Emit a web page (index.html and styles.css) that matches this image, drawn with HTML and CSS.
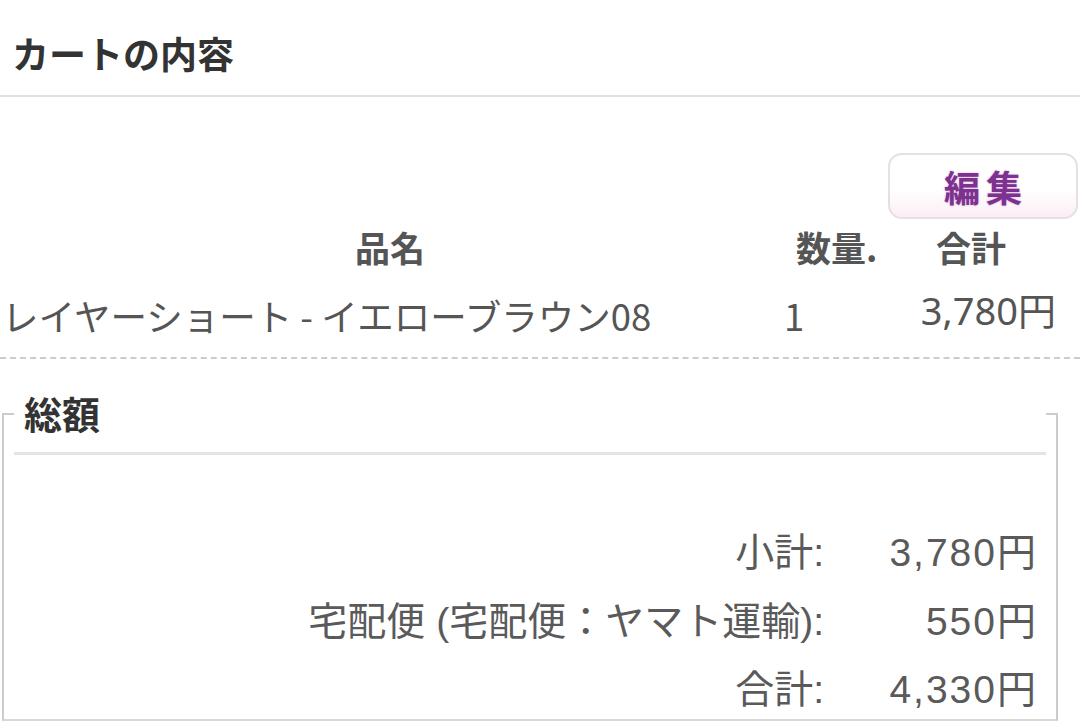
FILE: index.html
```html
<!DOCTYPE html>
<html lang="ja">
<head>
<meta charset="utf-8">
<link rel="stylesheet" href="styles.css">
</head>
<body>
<div class="page">
  <header class="title-bar">
    <h1 class="title">カートの内容</h1>
  </header>
  <section class="cart">
    <div class="actions">
      <button class="edit-btn">編集</button>
    </div>
    <div class="cart-grid">
      <div class="th th-name">品名</div>
      <div class="th th-qty">数量.</div>
      <div class="th th-total">合計</div>
      <div class="td td-name">レイヤーショート - イエローブラウン08</div>
      <div class="td td-qty">1</div>
      <div class="td td-total">3,780円</div>
    </div>
  </section>
  <fieldset class="summary">
    <legend class="summary-legend">総額</legend>
    <div class="summary-rows">
      <div class="s-label">小計:</div><div class="s-value">3,780円</div>
      <div class="s-label">宅配便 (宅配便：ヤマト運輸):</div><div class="s-value">550円</div>
      <div class="s-label">合計:</div><div class="s-value">4,330円</div>
    </div>
  </fieldset>
</div>
</body>
</html>
```
FILE: styles.css
```css
html, body {
  margin: 0;
  padding: 0;
  background: #fff;
}
body {
  width: 1080px;
  height: 722px;
  overflow: hidden;
  font-family: "Noto Sans CJK JP", "Noto Sans", sans-serif;
  color: #555;
}
.title-bar {
  height: 95px;
  border-bottom: 2px solid #e0e0e0;
  display: flex;
  align-items: center;
  padding-left: 12px;
}
.title {
  margin: 0;
  margin-top: 10px;
  font-size: 37px;
  font-weight: 700;
  color: #333;
}
.cart {
  padding-top: 56px;
}
.actions {
  display: flex;
  justify-content: flex-end;
  padding-right: 2px;
}
.edit-btn {
  width: 190px;
  height: 66px;
  border: 2px solid #e4e0e4;
  border-radius: 14px;
  background: linear-gradient(#ffffff 0%, #ffffff 55%, #fbeef5 100%);
  color: #7e3190;
  font-family: "Noto Sans CJK JP", sans-serif;
  font-size: 36px;
  font-weight: 700;
  padding: 0 0 0 6px;
  letter-spacing: 6px;
  text-shadow: 0 0 2px rgba(126, 49, 144, 0.45);
}
.cart-grid {
  display: grid;
  grid-template-columns: 780px 120px 156px;
  border-bottom: 2px dashed #cccccc;
}
.th {
  font-size: 35px;
  font-weight: 700;
  text-align: center;
  line-height: 56px;
  color: #555;
}
.th-qty { text-align: left; padding-left: 16px; }
.th-total { padding-right: 14px; }
.td {
  font-size: 36.5px;
  line-height: 82px;
  color: #555;
}
.td-name {
  padding-left: 2px;
}
.td-qty {
  padding-left: 4px;
}
.td-total {
  text-align: right;
  margin-top: -6px;
  font-family: "Noto Sans", "Noto Sans CJK JP", sans-serif;
  font-size: 38px;
}
.summary {
  margin: 14px 22px 0 2px;
  border: 2px solid #cccccc;
  border-bottom-color: #d8d8d8;
  padding: 0 10px;
  height: 344px;
}
.summary-legend {
  box-sizing: border-box;
  width: 100%;
  font-size: 38px;
  font-weight: 700;
  color: #333;
  padding: 14px 0 13px 10px;
  margin: 0;
  line-height: 52px;
  border-bottom: 3px solid #e4e4e4;
  background: #fff;
}
.summary-rows {
  display: grid;
  grid-template-columns: 1fr auto;
  column-gap: 62px;
  justify-items: end;
  padding-top: 64px;
  padding-right: 10px;
  font-family: "Liberation Sans", "Noto Sans CJK JP", sans-serif;
  font-size: 39px;
  line-height: 68.5px;
  color: #5a5a5a;
}
.s-value {
  min-width: 152px;
  text-align: right;
  letter-spacing: 2px;
  margin-right: -2px;
}
```
